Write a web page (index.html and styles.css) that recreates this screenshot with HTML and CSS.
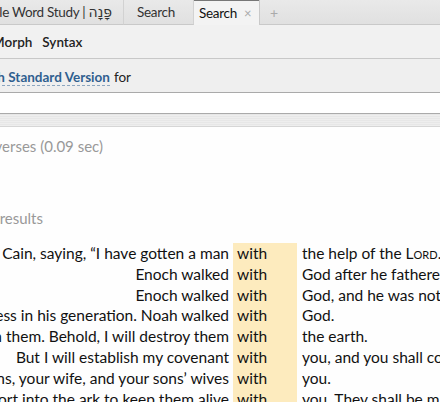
FILE: index.html
```html
<!DOCTYPE html>
<html>
<head>
<meta charset="utf-8">
<link rel="stylesheet" href="styles.css">
</head>
<body>
<div class="app">
  <div class="tabs">
    <div class="tab tab-first"><span class="tab-label">Bible Word Study | <span class="heb" lang="he">פָּנָה</span></span></div>
    <div class="tab tab-search">Search</div>
    <div class="tab tab-active">Search <span class="close">×</span></div>
    <div class="tab-add">+</div>
    <div class="tab-fill"></div>
  </div>
  <div class="toolbar">
    <span class="tool tool-morph">Morph</span>
    <span class="tool">Syntax</span>
  </div>
  <div class="versionbar">
    <div class="version-wrap"><span class="version">English Standard Version</span><span class="for">for</span></div>
  </div>
  <div class="input"></div>
  <div class="band"></div>
  <div class="content">
    <div class="stats"><span>118 verses (0.09 sec)</span></div>
    <div class="results-label"><span>Search results</span></div>
    <div class="results">
      <div class="row"><div class="pre">And Adam knew Eve his wife, and she conceived and bore Cain, saying, “I have gotten a man</div><div class="hit">with</div><div class="post">the help of the <span class="sc">Lord</span>.”<sup>*</sup></div></div>
      <div class="row"><div class="pre">Enoch walked</div><div class="hit">with</div><div class="post">God after he fathered Methuselah</div></div>
      <div class="row"><div class="pre">Enoch walked</div><div class="hit">with</div><div class="post">God, and he was not, for God took him.</div></div>
      <div class="row"><div class="pre">Noah was a righteous man, blameless in his generation. Noah walked</div><div class="hit">with</div><div class="post">God.</div></div>
      <div class="row"><div class="pre">for the earth is filled with violence through them. Behold, I will destroy them</div><div class="hit">with</div><div class="post">the earth.</div></div>
      <div class="row"><div class="pre">But I will establish my covenant</div><div class="hit">with</div><div class="post">you, and you shall come into the ark</div></div>
      <div class="row"><div class="pre">you, your sons, your wife, and your sons’ wives</div><div class="hit">with</div><div class="post">you.</div></div>
      <div class="row"><div class="pre">two of every sort into the ark to keep them alive</div><div class="hit">with</div><div class="post">you. They shall be male and female.</div></div>
    </div>
  </div>
</div>
</body>
</html>
```

FILE: styles.css
```css
html, body {
  margin: 0;
  padding: 0;
  background: #fefefe;
}
body {
  width: 440px;
  height: 402px;
  overflow: hidden;
  font-family: "Lato", "Open Sans", sans-serif;
  color: #222;
}
.app {
  width: 440px;
  overflow: hidden;
}
.tabs {
  display: flex;
  height: 25px;
  background: linear-gradient(#e9e9e9, #e0e0e0);
  font-size: 13.5px;
}
.tab {
  display: flex;
  align-items: center;
  box-sizing: border-box;
  border-bottom: 1px solid #c9c9c9;
  color: #333;
  white-space: nowrap;
}
.tab-first {
  width: 124px;
  justify-content: flex-end;
  overflow: hidden;
  border-right: 1px solid #d2d2d2;
  padding-right: 11px;
}
.tab-label {
  letter-spacing: -0.3px;
}
.heb {
  font-family: "DejaVu Sans", sans-serif;
  font-size: 14px;
  letter-spacing: 0;
}
.tab-search {
  width: 70px;
  padding-left: 13px;
  border-right: 1px solid #d2d2d2;
  letter-spacing: -0.3px;
}
.tab-active {
  width: 65px;
  padding-left: 5px;
  background: #f3f3f3;
  border-bottom: none;
  border-top: 1px solid #777;
  color: #111;
  letter-spacing: -0.3px;
}
.close {
  color: #aaa;
  margin-left: 7px;
  font-size: 13px;
}
.tab-add {
  display: flex;
  align-items: center;
  box-sizing: border-box;
  width: 30px;
  padding-left: 10px;
  color: #aaa;
  border-left: 1px solid #c9c9c9;
  border-bottom: 1px solid #c9c9c9;
  font-size: 14px;
}
.tab-fill {
  flex: 1;
  border-bottom: 1px solid #c9c9c9;
}
.toolbar {
  display: flex;
  align-items: center;
  gap: 10px;
  height: 34px;
  box-sizing: border-box;
  background: #f1f1f1;
  border-bottom: 1px solid #c8c8c8;
  font-size: 13.5px;
  font-weight: 600;
  color: #222;
  padding-top: 1px;
}
.tool-morph {
  margin-left: -8px;
}
.versionbar {
  display: flex;
  align-items: center;
  height: 34px;
  box-sizing: border-box;
  padding-top: 4px;
  background: #efefef;
  border-bottom: 1px solid #aaa;
  font-size: 13.5px;
  white-space: nowrap;
}
.version-wrap {
  width: 131px;
  display: flex;
  justify-content: flex-end;
  align-items: baseline;
}
.version {
  color: #2f5f8f;
  font-weight: 700;
  border-bottom: 1px dashed #8ca6c0;
  line-height: 16px;
}
.for {
  margin-left: 4px;
  color: #222;
}
.input {
  height: 20px;
  background: #fff;
  border-bottom: 1px solid #aaa;
}
.band {
  height: 12px;
  background: repeating-linear-gradient(#e7e7e7 0 1px, #eeeeee 1px 2px);
  border-bottom: 1px solid #d6d6d6;
}
.content {
  background: #fefefe;
  font-size: 15px;
}
.stats, .results-label {
  display: flex;
  justify-content: flex-end;
  white-space: nowrap;
  color: #999;
  line-height: 18px;
}
.stats {
  margin-top: 10px;
  width: 103px;
}
.results-label {
  margin-top: 54px;
  width: 43px;
}
.results {
  margin-top: 16px;
}
.row {
  display: grid;
  grid-template-columns: 233px 64px 1fr;
  height: 20.8px;
  line-height: 20.8px;
  white-space: nowrap;
  font-size: 15.5px;
  color: #111;
}
.pre {
  overflow: hidden;
  display: flex;
  justify-content: flex-end;
  padding-right: 4px;
}
.hit {
  background: #fdebbe;
  padding-left: 4px;
}
.post {
  padding-left: 5px;
  overflow: hidden;
}
.sc {
  font-variant: small-caps;
}
sup {
  font-size: 9px;
  line-height: 0;
}
```
